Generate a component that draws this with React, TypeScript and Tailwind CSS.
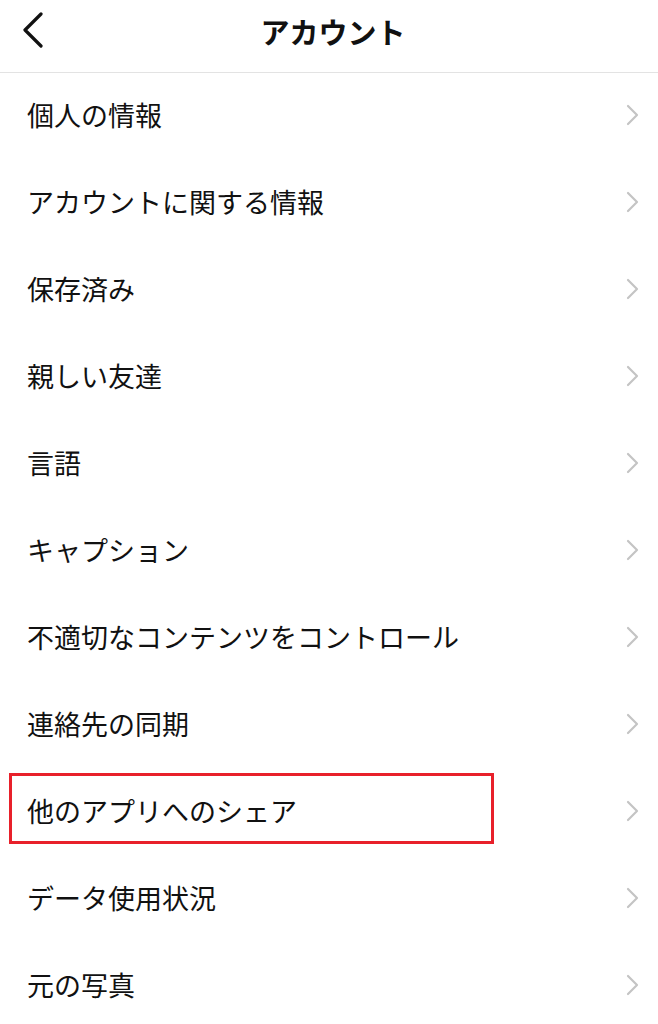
const items = [
  "個人の情報",
  "アカウントに関する情報",
  "保存済み",
  "親しい友達",
  "言語",
  "キャプション",
  "不適切なコンテンツをコントロール",
  "連絡先の同期",
  "他のアプリへのシェア",
  "データ使用状況",
  "元の写真",
];

const Chevron = () => (
  <svg width="14" height="22" viewBox="0 0 14 22" fill="none">
    <path d="M2 2l9 9-9 9" stroke="#c4c4c4" strokeWidth="2.2" strokeLinecap="round" strokeLinejoin="round" />
  </svg>
);

const App = () => {
  return (
    <div
      className="w-[658px] h-[1024px] overflow-hidden bg-white text-[#111]"
      style={{ fontFamily: '"Noto Sans CJK JP", "Noto Sans", sans-serif' }}
    >
      <header className="relative h-[73px] border-b border-[#e3e3e3] flex justify-center">
        <button className="absolute left-[18px] top-[11px] w-[30px] h-[38px] flex items-center justify-center">
          <svg width="24" height="36" viewBox="0 0 24 36" fill="none">
            <path d="M20 2L4 18l16 16" stroke="#111" strokeWidth="3.2" strokeLinecap="round" strokeLinejoin="round" />
          </svg>
        </button>
        <h1 className="pt-[12px] pl-[8px] text-[29px] leading-[38px] font-bold">アカウント</h1>
      </header>

      <ul>
        {items.map((label) => (
          <li key={label} className="relative h-[87px] flex items-center justify-between pl-[27px] pr-[18px] pb-[4px]">
            <span className="text-[27px] leading-none">{label}</span>
            <Chevron />
            {label === "他のアプリへのシェア" && (
              <div className="absolute left-[9px] top-[4px] w-[485px] h-[71px] border-[3px] border-[#e8202a]" />
            )}
          </li>
        ))}
      </ul>
    </div>
  );
};

export default App;
